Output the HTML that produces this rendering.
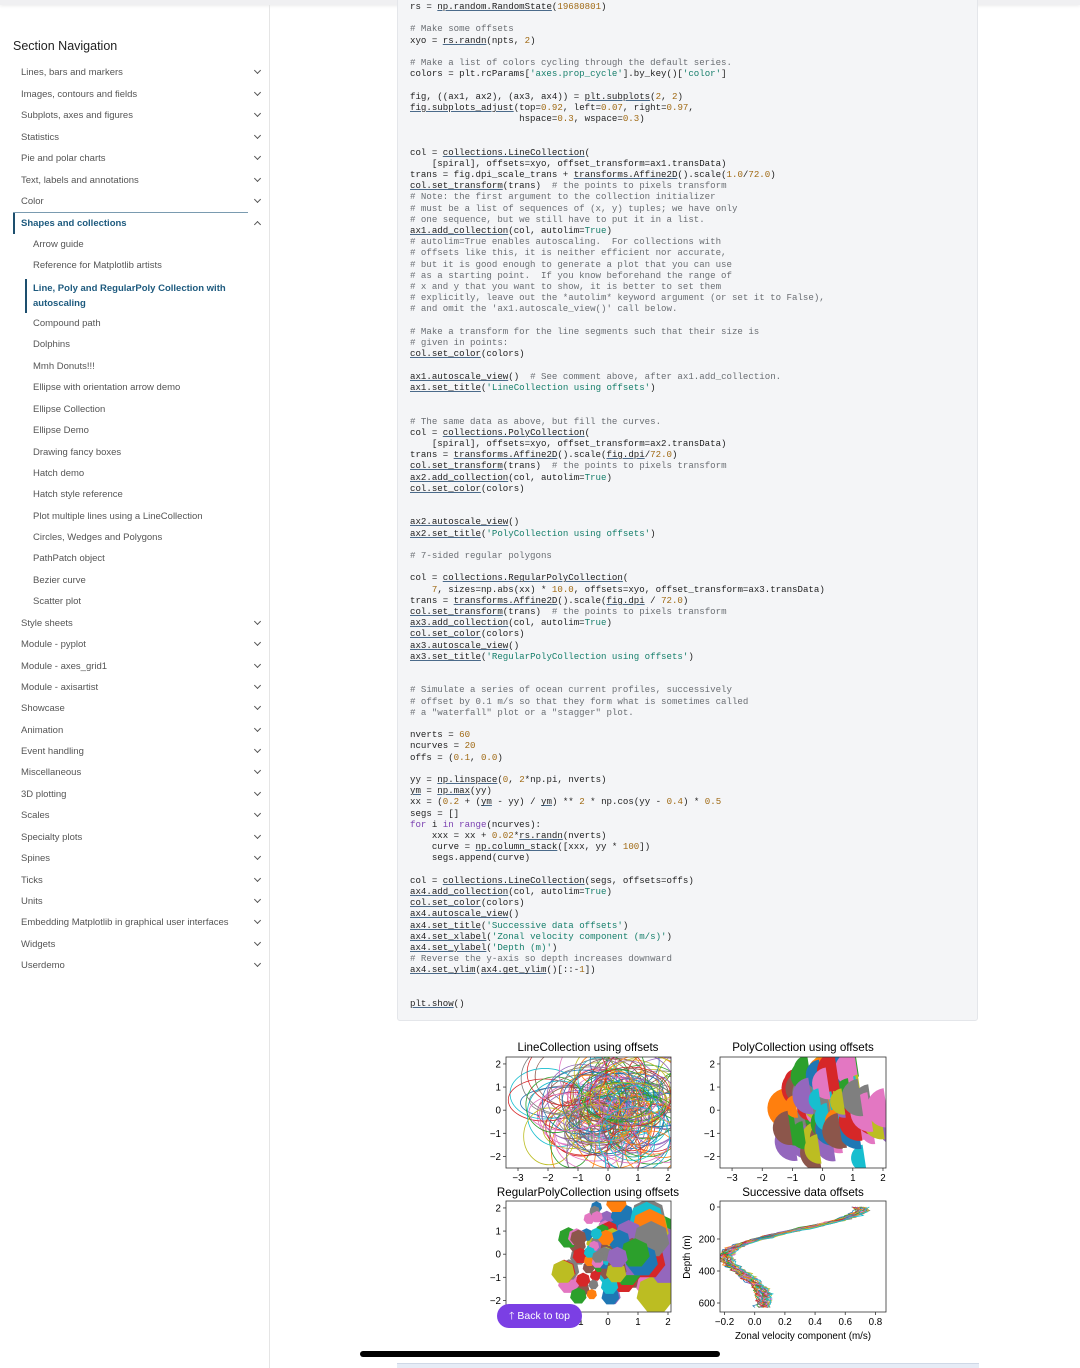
<!DOCTYPE html>
<html><head><meta charset="utf-8">
<style>
*{margin:0;padding:0;box-sizing:border-box}
body{width:1080px;height:1368px;background:#fff;position:relative;overflow:hidden;font-family:"Liberation Sans",sans-serif}
.top{position:absolute;left:0;top:0;width:1080px;height:5px;background:#f0f0f2;box-shadow:0 1px 3px rgba(0,0,0,.08)}
.side{position:absolute;left:269px;top:5px;width:1px;height:1363px;background:#e5e5e5}
h2{position:absolute;left:13px;top:39px;font-size:12.5px;font-weight:normal;color:#222}
.it{position:absolute;left:21px;font-size:9.5px;color:#555;white-space:nowrap;line-height:12px}
.sub{left:33px}
.chev{position:absolute;left:255px;width:5px;height:5px;border-right:1.1px solid #555;border-bottom:1.1px solid #555;transform:rotate(45deg)}
.up{transform:rotate(-135deg)}
.act{color:#1d5a7e;font-weight:bold}
pre{position:absolute;left:397px;top:-5px;width:581px;height:1026px;background:#f4f5f7;border:1px solid #e4e6ea;border-radius:3px;padding:5px 0 0 12px;font-family:"Liberation Mono",monospace;font-size:9.1px;line-height:11.2px;color:#222}
.c{color:#6a6e73}.s{color:#167f6b}.n{color:#a06a14}.k{color:#7a3fb0}.u{text-decoration:underline;text-decoration-color:#4a6a8a}
.btn{position:absolute;left:497px;top:1304px;width:85px;height:24px;border-radius:12px;background:#7b3fe4;color:#fff;font-size:10.5px;line-height:24px;text-align:center;white-space:nowrap}
.bar{position:absolute;left:360px;top:1351px;width:360px;height:6px;background:#000;border-radius:3px}
.btm{position:absolute;left:397px;top:1363px;width:582px;height:5px;background:#e6ecf6;border-top:1px solid #cfd8e6}
</style></head><body>
<div class="top"></div><div class="side"></div>
<h2>Section Navigation</h2>
<div id="nav"></div>
<pre id="code"></pre>
<svg style="position:absolute;left:480px;top:1030px" width="420" height="320" font-family="Liberation Sans, sans-serif" font-size="10.5" fill="#000">
<defs>
<clipPath id="c1"><rect x="26" y="27" width="165" height="111"/></clipPath>
<clipPath id="c2"><rect x="240" y="27" width="166" height="111"/></clipPath>
<clipPath id="c3"><rect x="26" y="171" width="165" height="111"/></clipPath>
<clipPath id="c4"><rect x="240" y="171" width="166" height="111"/></clipPath>
</defs>
<g id="g1" clip-path="url(#c1)"></g><g id="g2" clip-path="url(#c2)"></g><g id="g3" clip-path="url(#c3)"></g><g id="g4" clip-path="url(#c4)"></g>
<g fill="none" stroke="#333" stroke-width="0.8">
<rect x="26" y="27" width="165" height="111"/><rect x="240" y="27" width="166" height="111"/>
<rect x="26" y="171" width="165" height="111"/><rect x="240" y="171" width="166" height="111"/>
</g>
<g text-anchor="middle" font-size="11.6">
<text x="108" y="21">LineCollection using offsets</text>
<text x="323" y="21">PolyCollection using offsets</text>
<text x="108" y="166">RegularPolyCollection using offsets</text>
<text x="323" y="166">Successive data offsets</text>
</g>
<g id="ticks" font-size="9.8"></g>
<text x="323" y="309" text-anchor="middle" font-size="9.8">Zonal velocity component (m/s)</text>
<text transform="translate(210,227) rotate(-90)" text-anchor="middle" font-size="9.8">Depth (m)</text>
</svg>
<div class="btn">🡑 Back to top</div>
<div class="bar"></div><div class="btm"></div>
<script>
var nav=[["Lines, bars and markers",73],["Images, contours and fields",95],["Subplots, axes and figures",116],["Statistics",138],["Pie and polar charts",159],["Text, labels and annotations",181],["Color",202],["Shapes and collections",224,"a"],["Arrow guide",245,"s"],["Reference for Matplotlib artists",266,"s"],["Line, Poly and RegularPoly Collection with<br>autoscaling",295,"x"],["Compound path",324,"s"],["Dolphins",345,"s"],["Mmh Donuts!!!",367,"s"],["Ellipse with orientation arrow demo",388,"s"],["Ellipse Collection",410,"s"],["Ellipse Demo",431,"s"],["Drawing fancy boxes",453,"s"],["Hatch demo",474,"s"],["Hatch style reference",495,"s"],["Plot multiple lines using a LineCollection",517,"s"],["Circles, Wedges and Polygons",538,"s"],["PathPatch object",559,"s"],["Bezier curve",581,"s"],["Scatter plot",602,"s"],["Style sheets",624],["Module - pyplot",645],["Module - axes_grid1",667],["Module - axisartist",688],["Showcase",709],["Animation",731],["Event handling",752],["Miscellaneous",773],["3D plotting",795],["Scales",816],["Specialty plots",838],["Spines",859],["Ticks",881],["Units",902],["Embedding Matplotlib in graphical user interfaces",923],["Widgets",945],["Userdemo",966]];
var h='';
nav.forEach(function(n){var t=n[2];
 if(t=='x'){h+='<div class="it sub act" style="top:'+(n[1]-14)+'px;line-height:15px">'+n[0]+'</div><div style="position:absolute;left:25px;top:279px;width:2px;height:34px;background:#1d4f6e"></div>';return;}
 h+='<div class="it'+(t=='s'?' sub':'')+(t=='a'?' act':'')+'" style="top:'+(n[1]-6)+'px">'+n[0]+'</div>';
 if(!t)h+='<div class="chev" style="top:'+(n[1]-5)+'px"></div>';
 if(t=='a')h+='<div class="chev up" style="top:'+(n[1]-2)+'px"></div><div style="position:absolute;left:13px;top:212px;width:235px;height:1px;background:#7a9bb0"></div><div style="position:absolute;left:13px;top:213px;width:2px;height:21px;background:#1d4f6e"></div>';
});
document.getElementById('nav').innerHTML=h;
function U(s){return '<span class="u">'+s+'</span>'}
function C(s){return '<span class="c">'+s+'</span>'}
function S(s){return '<span class="s">'+s+'</span>'}
function N(s){return '<span class="n">'+s+'</span>'}
var L=[
'rs = '+U('np.random.RandomState')+'('+N('19680801')+')','',
C('# Make some offsets'),'xyo = '+U('rs.randn')+'(npts, '+N('2')+')','',
C('# Make a list of colors cycling through the default series.'),
"colors = plt.rcParams["+S("'axes.prop_cycle'")+"].by_key()["+S("'color'")+"]",'',
'fig, ((ax1, ax2), (ax3, ax4)) = '+U('plt.subplots')+'('+N('2')+', '+N('2')+')',
U('fig.subplots_adjust')+'(top='+N('0.92')+', left='+N('0.07')+', right='+N('0.97')+',',
'                    hspace='+N('0.3')+', wspace='+N('0.3')+')','','',
'col = '+U('collections.LineCollection')+'(',
'    [spiral], offsets=xyo, offset_transform=ax1.transData)',
'trans = fig.dpi_scale_trans + '+U('transforms.Affine2D')+'().scale('+N('1.0')+'/'+N('72.0')+')',
U('col.set_transform')+'(trans)  '+C('# the points to pixels transform'),
C('# Note: the first argument to the collection initializer'),
C('# must be a list of sequences of (x, y) tuples; we have only'),
C('# one sequence, but we still have to put it in a list.'),
U('ax1.add_collection')+'(col, autolim='+S('True')+')',
C('# autolim=True enables autoscaling.  For collections with'),
C('# offsets like this, it is neither efficient nor accurate,'),
C('# but it is good enough to generate a plot that you can use'),
C('# as a starting point.  If you know beforehand the range of'),
C('# x and y that you want to show, it is better to set them'),
C('# explicitly, leave out the *autolim* keyword argument (or set it to False),'),
C("# and omit the 'ax1.autoscale_view()' call below."),'',
C('# Make a transform for the line segments such that their size is'),
C('# given in points:'),U('col.set_color')+'(colors)','',
U('ax1.autoscale_view')+'()  '+C('# See comment above, after ax1.add_collection.'),
U('ax1.set_title')+'('+S("'LineCollection using offsets'")+')','','',
C('# The same data as above, but fill the curves.'),
'col = '+U('collections.PolyCollection')+'(',
'    [spiral], offsets=xyo, offset_transform=ax2.transData)',
'trans = '+U('transforms.Affine2D')+'().scale('+U('fig.dpi')+'/'+N('72.0')+')',
U('col.set_transform')+'(trans)  '+C('# the points to pixels transform'),
U('ax2.add_collection')+'(col, autolim='+S('True')+')',
U('col.set_color')+'(colors)','','',
U('ax2.autoscale_view')+'()',
U('ax2.set_title')+'('+S("'PolyCollection using offsets'")+')','',
C('# 7-sided regular polygons'),'',
'col = '+U('collections.RegularPolyCollection')+'(',
'    '+N('7')+', sizes=np.abs(xx) * '+N('10.0')+', offsets=xyo, offset_transform=ax3.transData)',
'trans = '+U('transforms.Affine2D')+'().scale('+U('fig.dpi')+' / '+N('72.0')+')',
U('col.set_transform')+'(trans)  '+C('# the points to pixels transform'),
U('ax3.add_collection')+'(col, autolim='+S('True')+')',
U('col.set_color')+'(colors)',U('ax3.autoscale_view')+'()',
U('ax3.set_title')+'('+S("'RegularPolyCollection using offsets'")+')','','',
C('# Simulate a series of ocean current profiles, successively'),
C('# offset by 0.1 m/s so that they form what is sometimes called'),
C('# a "waterfall" plot or a "stagger" plot.'),'',
'nverts = '+N('60'),'ncurves = '+N('20'),'offs = ('+N('0.1')+', '+N('0.0')+')','',
'yy = '+U('np.linspace')+'('+N('0')+', '+N('2')+'*np.pi, nverts)',
U('ym')+' = '+U('np.max')+'(yy)',
'xx = ('+N('0.2')+' + ('+U('ym')+' - yy) / '+U('ym')+') ** '+N('2')+' * np.cos(yy - '+N('0.4')+') * '+N('0.5'),
'segs = []','<span class="k">for</span> i <span class="k">in</span> <span class="k">range</span>(ncurves):',
'    xxx = xx + '+N('0.02')+'*'+U('rs.randn')+'(nverts)',
'    curve = '+U('np.column_stack')+'([xxx, yy * '+N('100')+'])','    segs.append(curve)','',
'col = '+U('collections.LineCollection')+'(segs, offsets=offs)',
U('ax4.add_collection')+'(col, autolim='+S('True')+')',
U('col.set_color')+'(colors)',U('ax4.autoscale_view')+'()',
U('ax4.set_title')+'('+S("'Successive data offsets'")+')',
U('ax4.set_xlabel')+'('+S("'Zonal velocity component (m/s)'")+')',
U('ax4.set_ylabel')+'('+S("'Depth (m)'")+')',
C('# Reverse the y-axis so depth increases downward'),
U('ax4.set_ylim')+'('+U('ax4.get_ylim')+'()[::-'+N('1')+'])','','',
U('plt.show')+'()'];
document.getElementById('code').innerHTML=L.join('\n');
var T=['#1f77b4','#ff7f0e','#2ca02c','#d62728','#9467bd','#8c564b','#e377c2','#7f7f7f','#bcbd22','#17becf'];
var sd=7;function R(){sd=(sd*16807)%2147483647;return sd/2147483647}
function G(){return (R()+R()+R()-1.5)*2.2}
var ns='http://www.w3.org/2000/svg';
function el(g,t,a){var e=document.createElementNS(ns,t);for(var k in a)e.setAttribute(k,a[k]);document.getElementById(g).appendChild(e)}
function X1(v){return 26+(v+3.4)/5.5*165}function Y1(v){return 27+(2.3-v)/4.8*111}
for(var i=0;i<140;i++){var x=G()*0.8+0.2,y=G()*0.8;el('g1','ellipse',{cx:X1(x),cy:Y1(y),rx:16+R()*26,ry:14+R()*22,fill:'none',stroke:T[i%10],'stroke-width':0.8})}
function X2(v){return 240+(v+3.4)/5.5*166}
for(var i=0;i<110;i++){var x=G()*0.7+0.2,y=G()*0.8;var cx=X2(x),cy=Y1(y),r=11+R()*10;
 el('g2','path',{d:'M'+cx+','+(cy-r)+' A'+r+','+r+' 0 1,0 '+(cx+r*0.3)+','+(cy+r)+' Z',fill:T[i%10]})}
function poly(cx,cy,r){var p=[];for(var k=0;k<7;k++){var a=k*2*Math.PI/7-Math.PI/2;p.push((cx+r*Math.cos(a)).toFixed(1)+','+(cy+r*Math.sin(a)).toFixed(1))}return p.join(' ')}
for(var i=0;i<110;i++){var x=G()*0.7+0.2,y=G()*0.8;el('g3','polygon',{points:poly(X1(x),Y1(y)+144,5+Math.abs(x+0.5)*7),fill:T[i%10]})}
function X4(v){return 240+(v+0.23)/1.1*166}function Y4(v){return 177+v/600*96}
for(var c=0;c<20;c++){var p=[];for(var j=0;j<60;j++){var yy=j/59*2*Math.PI;var xx=Math.pow(0.2+(2*Math.PI-yy)/(2*Math.PI),2)*Math.cos(yy-0.4)*0.5+0.02*G()/2.2*1.4+c*0.004;p.push(X4(xx).toFixed(1)+','+Y4(yy*100).toFixed(1))}
 el('g4','polyline',{points:p.join(' '),fill:'none',stroke:T[c%10],'stroke-width':0.8})}
var tk='';
function yt(x,y,s){tk+='<line x1="'+x+'" x2="'+(x-3)+'" y1="'+y+'" y2="'+y+'" stroke="#333" stroke-width="0.8"/><text x="'+(x-5)+'" y="'+(y+3.5)+'" text-anchor="end">'+s+'</text>'}
function xt(x,y,s){tk+='<line x1="'+x+'" x2="'+x+'" y1="'+y+'" y2="'+(y+3)+'" stroke="#333" stroke-width="0.8"/><text x="'+x+'" y="'+(y+13)+'" text-anchor="middle">'+s+'</text>'}
var yl=['2','1','0','\u22121','\u22122'],xl=['\u22123','\u22122','\u22121','0','1','2'];
for(var i=0;i<5;i++){yt(26,Y1(2-i),yl[i]);yt(240,Y1(2-i),yl[i]);yt(26,Y1(2-i)+144,yl[i])}
for(var i=0;i<6;i++){xt(X1(i-3),138,xl[i]);xt(X2(i-3),138,xl[i]);xt(X1(i-3),282,xl[i])}
[0,200,400,600].forEach(function(v){yt(240,Y4(v),v)});
['\u22120.2','0.0','0.2','0.4','0.6','0.8'].forEach(function(s,i){xt(X4(-0.2+i*0.2),282,s)});
document.getElementById('ticks').innerHTML=tk;
</script>
</body></html>
